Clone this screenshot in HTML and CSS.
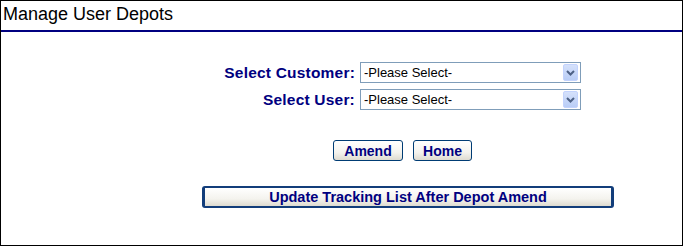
FILE: index.html
```html
<!DOCTYPE html>
<html>
<head>
<meta charset="utf-8">
<title>Manage User Depots</title>
<link rel="stylesheet" href="styles.css">
</head>
<body>
<div class="panel">
  <div class="header">Manage User Depots</div>
  <div class="form">
    <label class="label" for="cust">Select Customer:</label>
    <div class="select">
      <select id="cust"><option>-Please Select-</option></select>
      <span class="arrow"><svg width="9" height="6" viewBox="0 0 9 6"><path d="M1 1 L4.5 4.5 L8 1" fill="none" stroke="#4d6185" stroke-width="2"/></svg></span>
    </div>
    <label class="label" for="user">Select User:</label>
    <div class="select">
      <select id="user"><option>-Please Select-</option></select>
      <span class="arrow"><svg width="9" height="6" viewBox="0 0 9 6"><path d="M1 1 L4.5 4.5 L8 1" fill="none" stroke="#4d6185" stroke-width="2"/></svg></span>
    </div>
  </div>
  <div class="buttons">
    <button class="btn btn-amend">Amend</button>
    <button class="btn btn-home">Home</button>
  </div>
  <div class="update-row">
    <button class="btn btn-update">Update Tracking List After Depot Amend</button>
  </div>
</div>
</body>
</html>
```

FILE: styles.css
```css
html, body {
  margin: 0;
  padding: 0;
  background: #ffffff;
}

.panel {
  box-sizing: border-box;
  width: 683px;
  height: 246px;
  border: 1px solid #000000;
  font-family: "Liberation Sans", Arial, sans-serif;
}

.header {
  height: 29px;
  padding-left: 2px;
  font-size: 18px;
  line-height: 27px;
  color: #000000;
  border-bottom: 2px solid #000080;
}

.form {
  display: grid;
  grid-template-columns: 354px 221px;
  column-gap: 5px;
  row-gap: 6px;
  margin-top: 30px;
  align-items: center;
}

.label {
  text-align: right;
  font-weight: bold;
  font-size: 15.5px;
  letter-spacing: 0.2px;
  color: #000080;
}

.select {
  box-sizing: border-box;
  height: 21px;
  display: flex;
  align-items: center;
  border: 1px solid #7f9db9;
  background: #ffffff;
}

.select select {
  flex: 1;
  appearance: none;
  -webkit-appearance: none;
  border: none;
  background: transparent;
  font-family: "Liberation Sans", Arial, sans-serif;
  font-size: 13px;
  color: #000000;
  padding: 0 0 0 3px;
  margin: 0;
  height: 19px;
  outline: none;
}

.arrow {
  box-sizing: border-box;
  width: 15px;
  height: 17px;
  margin-right: 2px;
  display: flex;
  align-items: center;
  justify-content: center;
  background: linear-gradient(#d5e1fb, #b9cdf6);
  border: 1px solid #c3d3fd;
  border-radius: 2px;
}

.buttons {
  display: flex;
  gap: 10px;
  margin-top: 30px;
  padding-left: 332px;
}

.btn {
  box-sizing: border-box;
  font-family: "Liberation Sans", Arial, sans-serif;
  font-weight: bold;
  color: #000080;
  background: linear-gradient(#ffffff 0%, #f4f3ee 60%, #dedbd0 100%);
  border: 1px solid #003c74;
  border-radius: 3px;
  padding: 0;
  margin: 0;
}

.btn-amend {
  width: 70px;
  height: 21px;
  font-size: 14px;
}

.btn-home {
  width: 59px;
  height: 21px;
  font-size: 14px;
}

.update-row {
  margin-top: 25px;
  padding-left: 201px;
}

.btn-update {
  width: 412px;
  height: 22px;
  font-size: 14.5px;
  border-width: 2px 3px;
  border-color: #123d7a;
  border-radius: 3px;
}
```
